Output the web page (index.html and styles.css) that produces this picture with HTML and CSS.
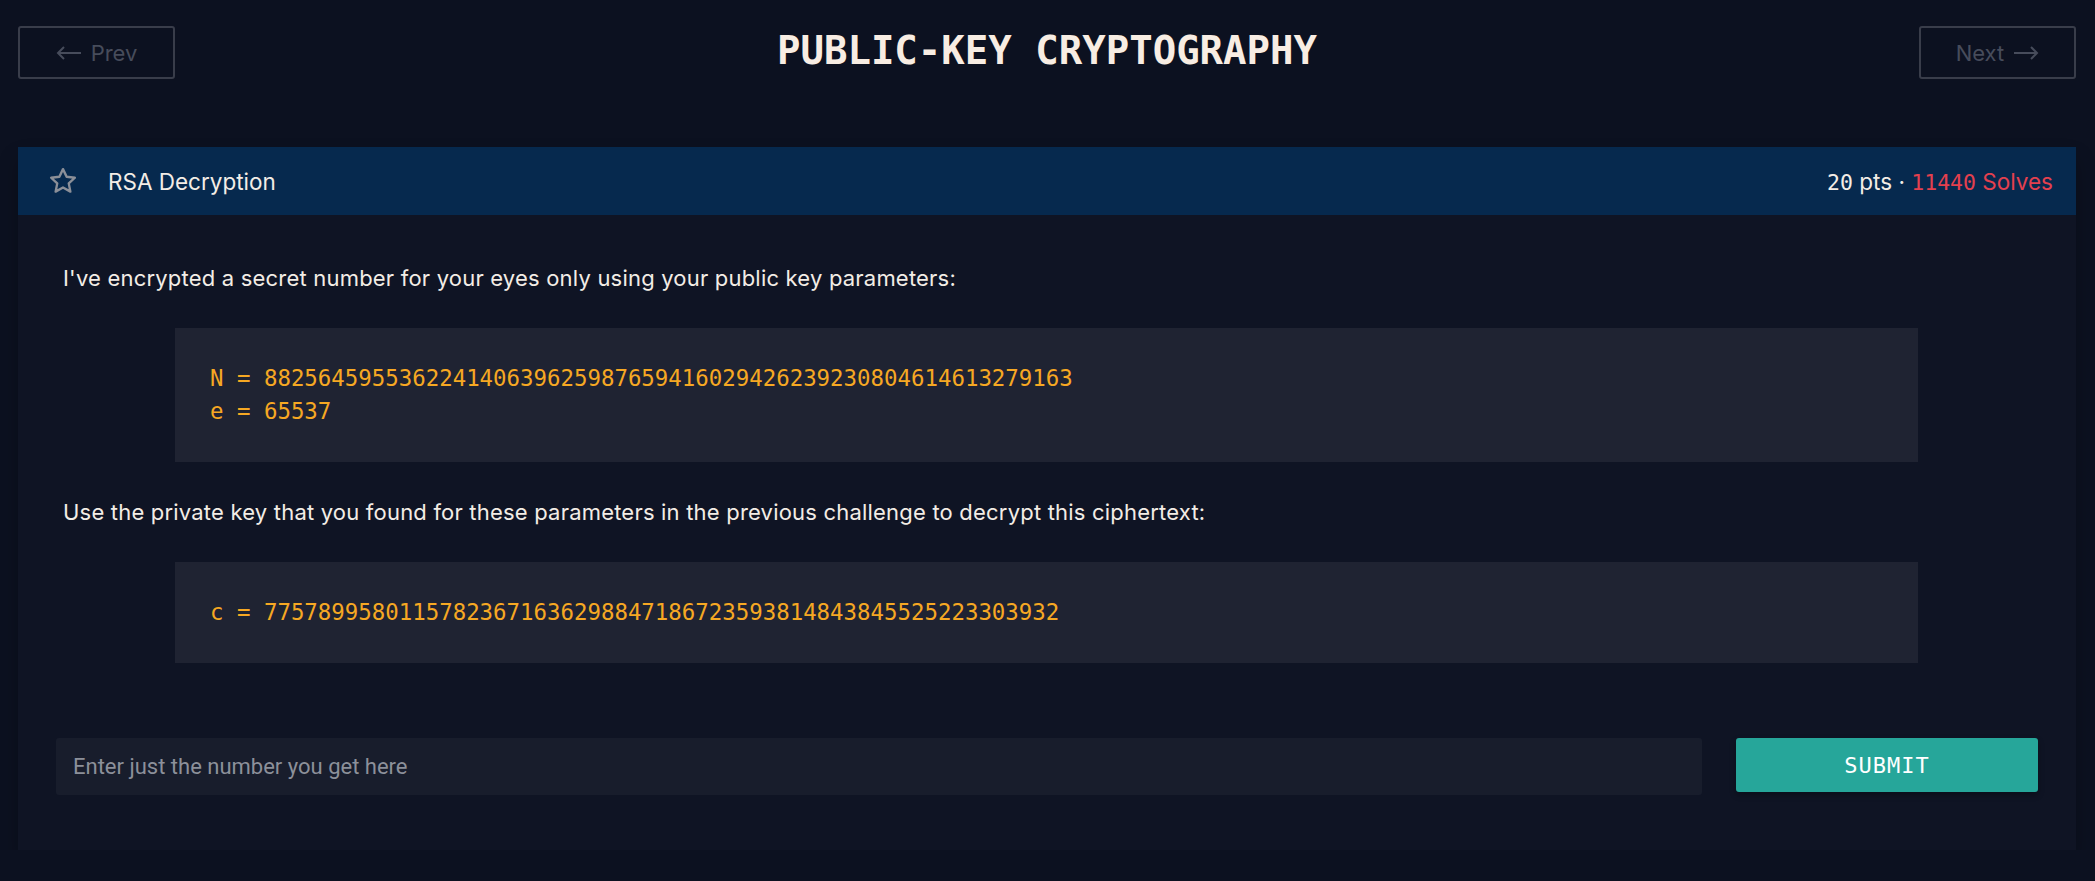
FILE: index.html
```html
<!DOCTYPE html>
<html lang="en">
<head>
    <meta charset="UTF-8">
    <meta name="viewport" content="width=device-width, initial-scale=1.0">
    <title>RSA Decryption</title>
    <link rel="stylesheet" href="styles.css">
</head>
<body>
    <div class="topbar">
        <a class="navbtn" href="#">
            <svg width="26" height="14" viewBox="0 0 26 14"><path d="M25 7H2M8 1L2 7l6 6" fill="none" stroke="currentColor" stroke-width="2"/></svg>
            Prev
        </a>
        <h1 class="title">PUBLIC-KEY CRYPTOGRAPHY</h1>
        <a class="navbtn" href="#">
            Next
            <svg width="26" height="14" viewBox="0 0 26 14"><path d="M1 7h23M18 1l6 6-6 6" fill="none" stroke="currentColor" stroke-width="2"/></svg>
        </a>
    </div>

    <div class="card">
        <div class="card-head">
            <svg class="star" width="30" height="30" viewBox="0 0 24 24"><polygon points="12,2.5 14.9,8.6 21.5,9.4 16.6,13.9 17.9,20.5 12,17.2 6.1,20.5 7.4,13.9 2.5,9.4 9.1,8.6" fill="none" stroke="#8b8f98" stroke-width="1.9" stroke-linejoin="round"/></svg>
            <span class="chal-name">RSA Decryption</span>
            <span class="score"><span class="num">20</span> pts &middot; <span class="solves"><span class="num">11440</span> Solves</span></span>
        </div>

        <div class="card-body">
            <p>I've encrypted a secret number for your eyes only using your public key parameters:</p>
            <pre class="code">N = 882564595536224140639625987659416029426239230804614613279163
e = 65537</pre>
            <p>Use the private key that you found for these parameters in the previous challenge to decrypt this ciphertext:</p>
            <pre class="code">c = 77578995801157823671636298847186723593814843845525223303932</pre>

            <form class="answer" onsubmit="return false">
                <input type="text" placeholder="Enter just the number you get here">
                <button type="submit">SUBMIT</button>
            </form>
        </div>
    </div>
</body>
</html>
```

FILE: styles.css
```css
body {
  margin: 0;
  padding: 26px 19px 0 18px;
  background-color: #0c1120;
  color: #f3ede6;
  font-family: "Inter", "Liberation Sans", sans-serif;
}

.topbar {
  display: flex;
  align-items: center;
  justify-content: space-between;
  height: 53px;
}

.navbtn {
  box-sizing: border-box;
  width: 157px;
  height: 53px;
  display: flex;
  align-items: center;
  justify-content: center;
  gap: 9px;
  border: 2px solid #393d4a;
  border-radius: 3px;
  color: #474c5b;
  font-size: 22px;
  text-decoration: none;
}

.title {
  margin: 0;
  margin-top: -4px;
  font-family: "DejaVu Sans Mono", monospace;
  font-size: 39px;
  font-weight: bold;
  color: #f8ede3;
}

.card {
  margin-top: 68px;
  background-color: #0f1424;
  box-shadow: 0 12px 18px rgba(0, 0, 0, 0.25);
}

.card-head {
  height: 68px;
  display: flex;
  align-items: center;
  padding: 0 23px 0 30px;
  background-color: #06294e;
}

.star {
  margin-right: 30px;
}

.chal-name {
  font-size: 22.5px;
  flex: 1;
}

.score {
  font-size: 22.5px;
  color: #f3ede6;
}

.num {
  font-family: "DejaVu Sans Mono", monospace;
  font-size: 21.5px;
}

.solves {
  color: #e4404e;
}

.card-body {
  padding: 48px 45px 55px;
}

.card-body p {
  margin: 0;
  font-size: 22px;
  line-height: 30px;
  letter-spacing: 0.2px;
}

.code {
  margin: 35px 113px 35px 112px;
  padding: 34px 35px;
  background-color: #1f2332;
  color: #f6a823;
  font-family: "DejaVu Sans Mono", monospace;
  font-size: 22.4px;
  line-height: 33px;
}

.answer {
  display: flex;
  align-items: flex-start;
  gap: 34px;
  margin: 75px -7px 0;
}

.answer input {
  flex: 1;
  height: 57px;
  box-sizing: border-box;
  padding: 0 17px;
  border: none;
  border-radius: 3px;
  background-color: #181d2c;
  color: #f3ede6;
  font-family: "Roboto", sans-serif;
  font-size: 22px;
}

.answer input::placeholder {
  color: #8c909a;
}

.answer button {
  width: 302px;
  height: 54px;
  border: none;
  border-radius: 3px;
  background-color: #26a69a;
  color: #fff;
  font-family: "DejaVu Sans Mono", monospace;
  font-size: 22px;
  letter-spacing: 1px;
  cursor: pointer;
  box-shadow: 0 3px 6px rgba(0, 0, 0, 0.3);
}
```
